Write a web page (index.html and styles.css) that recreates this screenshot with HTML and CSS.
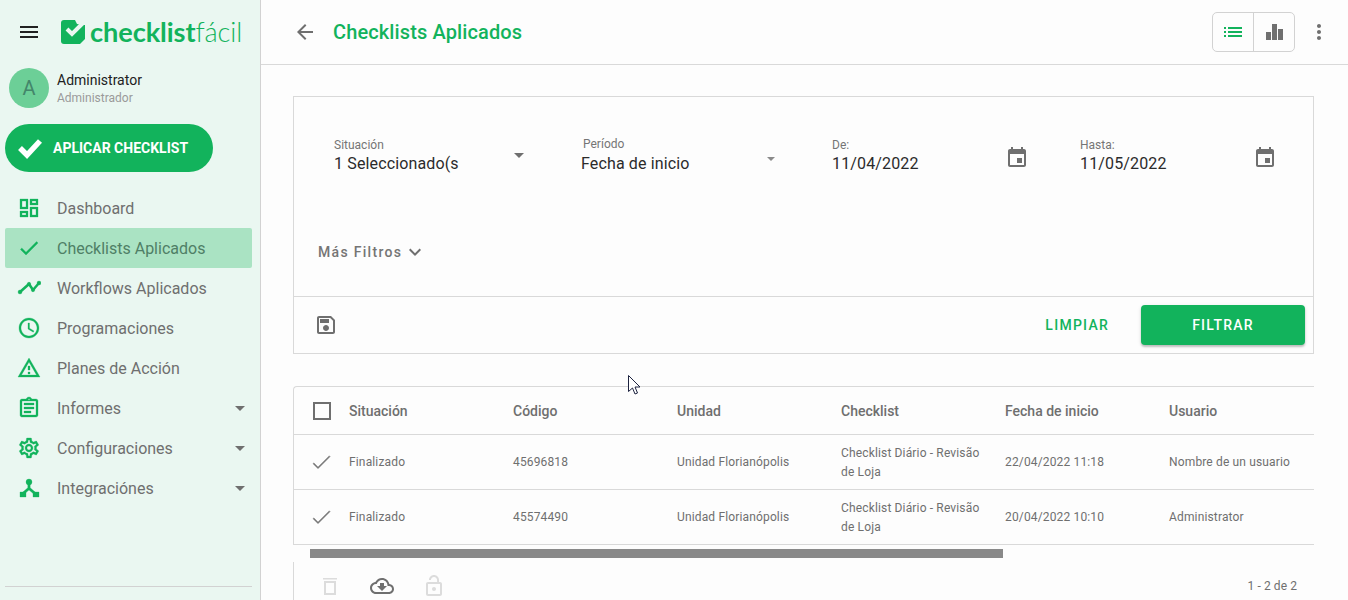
FILE: index.html
```html
<!DOCTYPE html>
<html lang="es">
<head>
<meta charset="utf-8">
<title>Checklists Aplicados</title>
<link rel="stylesheet" href="styles.css">
</head>
<body>
<div class="app">
  <aside class="sidebar">
    <div class="brand">
      <svg class="burger" viewBox="0 0 24 24"><path d="M3 18h18v-2H3v2zm0-5h18v-2H3v2zm0-7v2h18V6H3z"/></svg>
      <svg class="logo-mark" viewBox="0 0 24 24"><path d="M3 0H24V19L19 24H3Q0 24 0 21V3Q0 0 3 0Z" fill="#12b35c"/><path d="M14 0H24V5L22 5 16 4Z" fill="#eaf7f1"/><path d="M6 9l5 5L22 3" fill="none" stroke="#eaf7f1" stroke-width="4"/></svg>
      <span class="logo-text"><b>checklist</b>fácil</span>
    </div>
    <div class="user">
      <div class="avatar">A</div>
      <div class="user-info">
        <div class="user-name">Administrator</div>
        <div class="user-role">Administrador</div>
      </div>
    </div>
    <button class="apply">
      <svg viewBox="0 0 26 22"><path d="M3 11l7 7L23 4" fill="none" stroke="#fff" stroke-width="5.500"/></svg>
      <span>APLICAR CHECKLIST</span>
    </button>
    <nav class="nav">
      <a class="nav-item"><svg viewBox="0 0 24 24"><path d="M19 5v2h-4V5h4M9 5v6H5V5h4m10 8v6h-4v-6h4M9 17v2H5v-2h4M21 3h-8v6h8V3zM11 3H3v10h8V3zm10 8h-8v10h8V11zm-10 4H3v6h8v-6z"/></svg><span>Dashboard</span></a>
      <a class="nav-item active"><svg viewBox="0 0 24 24"><path d="M9 16.170L4.830 12l-1.420 1.410L9 19 21 7l-1.410-1.410z"/></svg><span>Checklists Aplicados</span></a>
      <a class="nav-item"><svg viewBox="0 0 24 24"><path d="M3 16l9-8 4 6 6-7" fill="none" stroke="#12b35c" stroke-width="2.500"/><circle cx="3" cy="16" r="2"/><circle cx="12" cy="8" r="1.800"/><circle cx="16" cy="14" r="1.800"/><circle cx="22" cy="7" r="2"/></svg><span>Workflows Aplicados</span></a>
      <a class="nav-item"><svg viewBox="0 0 24 24"><path d="M11.990 2C6.470 2 2 6.480 2 12s4.470 10 9.990 10C17.520 22 22 17.520 22 12S17.520 2 11.990 2zM12 20c-4.420 0-8-3.580-8-8s3.580-8 8-8 8 3.580 8 8-3.580 8-8 8zm.500-13H11v6l5.250 3.150.750-1.230-4.500-2.670z"/></svg><span>Programaciones</span></a>
      <a class="nav-item"><svg viewBox="0 0 24 24"><path d="M12 5.990L19.530 19H4.470L12 5.990M12 2L1 21h22L12 2zm1 14h-2v2h2v-2zm0-6h-2v4h2v-4z"/></svg><span>Planes de Acción</span></a>
      <a class="nav-item"><svg viewBox="0 0 24 24"><path d="M7 15h7v2H7zm0-4h10v2H7zm0-4h10v2H7zm12-4h-4.180C14.400 1.840 13.300 1 12 1c-1.300 0-2.400.840-2.820 2H5c-.140 0-.270.010-.400.040-.390.080-.740.280-1.010.550-.180.180-.330.400-.430.640-.100.230-.160.490-.160.770v14c0 .270.060.540.160.780s.250.450.430.640c.270.270.620.470 1.010.550.130.020.260.030.400.030h14c1.100 0 2-.900 2-2V5c0-1.100-.900-2-2-2zm-7-.250c.410 0 .750.340.750.750s-.340.750-.750.750-.750-.340-.750-.750.340-.750.750-.750zM19 19H5V5h14v14z"/></svg><span>Informes</span><i class="caret"></i></a>
      <a class="nav-item"><svg viewBox="0 0 24 24"><path d="M19.430 12.980c.040-.320.070-.640.070-.980s-.030-.660-.070-.980l2.110-1.650c.190-.150.240-.420.120-.640l-2-3.460c-.120-.220-.390-.300-.610-.220l-2.490 1c-.520-.400-1.080-.730-1.690-.980l-.380-2.650C14.460 2.180 14.250 2 14 2h-4c-.250 0-.460.180-.490.420l-.380 2.650c-.610.250-1.170.590-1.690.980l-2.490-1c-.230-.090-.490 0-.610.220l-2 3.460c-.130.220-.070.490.120.640l2.110 1.650c-.040.320-.070.650-.070.980s.030.660.070.980l-2.110 1.650c-.190.150-.240.420-.120.640l2 3.460c.120.220.390.300.610.220l2.490-1c.520.400 1.080.730 1.690.980l.380 2.650c.030.240.240.420.490.420h4c.250 0 .460-.180.490-.420l.380-2.650c.610-.250 1.170-.590 1.690-.980l2.490 1c.230.090.490 0 .610-.220l2-3.460c.120-.220.070-.490-.120-.640l-2.110-1.650zm-1.980-1.710c.040.310.050.520.050.730 0 .210-.020.430-.050.730l-.140 1.130.890.700 1.080.840-.700 1.210-1.270-.510-1.040-.420-.900.680c-.430.320-.840.560-1.250.730l-1.060.430-.160 1.130-.200 1.350h-1.400l-.190-1.350-.160-1.130-1.060-.430c-.430-.180-.830-.410-1.230-.710l-.910-.700-1.060.430-1.270.510-.700-1.210 1.080-.840.890-.700-.140-1.130c-.030-.310-.050-.540-.050-.740s.020-.430.050-.730l.140-1.130-.890-.700-1.080-.840.700-1.210 1.270.510 1.040.420.900-.680c.430-.320.840-.560 1.250-.730l1.060-.430.160-1.130.200-1.350h1.390l.190 1.350.160 1.130 1.060.430c.430.180.830.410 1.230.710l.910.700 1.060-.430 1.270-.510.700 1.210-1.070.850-.890.700.140 1.130zM12 8c-2.210 0-4 1.790-4 4s1.790 4 4 4 4-1.790 4-4-1.790-4-4-4zm0 6c-1.100 0-2-.900-2-2s.900-2 2-2 2 .900 2 2-.900 2-2 2z"/></svg><span>Configuraciones</span><i class="caret"></i></a>
      <a class="nav-item"><svg viewBox="0 0 24 24"><circle cx="12" cy="6" r="3"/><path d="M10.800 8h2.400v3.800l5.800 5-1.600 1.800L12 14l-5.400 4.600L5 16.800l5.800-5z"/><path d="M3 16h6v5H3zM16 16h6v5h-6z"/></svg><span>Integraciónes</span><i class="caret"></i></a>
    </nav>
    <div class="sidebar-rule"></div>
  </aside>

  <main class="main">
    <header class="topbar">
      <svg class="back" viewBox="0 0 24 24"><path d="M20 11H7.830l5.590-5.590L12 4l-8 8 8 8 1.410-1.410L7.830 13H20v-2z"/></svg>
      <h1>Checklists Aplicados</h1>
      <div class="view-toggle">
        <div class="toggle-cell"><svg viewBox="0 0 24 24"><path class="green" d="M3 13h2v-2H3v2zm0 4h2v-2H3v2zm0-8h2V7H3v2zm4 4h14v-2H7v2zm0 4h14v-2H7v2zM7 7v2h14V7H7z"/></svg></div>
        <div class="toggle-cell"><svg viewBox="0 0 24 24"><path d="M4 12h5v8H4zM10 4h5v16h-5zM16 9h5v11h-5z"/></svg></div>
      </div>
      <svg class="more" viewBox="0 0 24 24"><path d="M12 8c1.100 0 2-.900 2-2s-.900-2-2-2-2 .900-2 2 .900 2 2 2zm0 2c-1.100 0-2 .900-2 2s.900 2 2 2 2-.900 2-2-.900-2-2-2zm0 6c-1.100 0-2 .900-2 2s.900 2 2 2 2-.900 2-2-.900-2-2-2z"/></svg>
    </header>

    <section class="filters">
      <div class="fields">
        <div class="field f1"><label>Situación</label><div class="value">1 Seleccionado(s</div><i class="caret dark"></i></div>
        <div class="field f2"><label>Período</label><div class="value">Fecha de inicio</div><i class="caret small"></i></div>
        <div class="field f3"><label>De:</label><div class="value">11/04/2022</div>
          <svg class="cal" viewBox="0 0 24 24"><path d="M17 12h-5v5h5v-5zM16 1v2H8V1H6v2H5c-1.110 0-1.990.900-1.990 2L3 19c0 1.100.890 2 2 2h14c1.100 0 2-.900 2-2V5c0-1.100-.900-2-2-2h-1V1h-2zm3 18H5V8h14v11z"/></svg></div>
        <div class="field f4"><label>Hasta:</label><div class="value">11/05/2022</div>
          <svg class="cal" viewBox="0 0 24 24"><path d="M17 12h-5v5h5v-5zM16 1v2H8V1H6v2H5c-1.110 0-1.990.900-1.990 2L3 19c0 1.100.890 2 2 2h14c1.100 0 2-.900 2-2V5c0-1.100-.900-2-2-2h-1V1h-2zm3 18H5V8h14v11z"/></svg></div>
      </div>
      <div class="more-filters">
        <span>Más Filtros</span>
        <svg viewBox="0 0 24 24"><path d="M16.590 8.590L12 13.170 7.410 8.590 6 10l6 6 6-6z"/></svg>
      </div>
      <div class="filter-actions">
        <svg class="save" viewBox="0 0 24 24"><path d="M17 3H5c-1.110 0-2 .900-2 2v14c0 1.100.890 2 2 2h14c1.100 0 2-.900 2-2V7l-4-4zm2 16H5V5h11.170L19 7.830V19zm-7-7c-1.660 0-3 1.340-3 3s1.340 3 3 3 3-1.340 3-3-1.340-3-3-3zM6 6h9v4H6z"/></svg>
        <button class="btn-clear">LIMPIAR</button>
        <button class="btn-filter">FILTRAR</button>
      </div>
    </section>

    <section class="table">
      <div class="row head">
        <div class="check-cell"><span class="checkbox"></span></div>
        <div>Situación</div><div>Código</div><div>Unidad</div><div>Checklist</div><div>Fecha de inicio</div><div>Usuario</div>
      </div>
      <div class="row">
        <div class="check-cell"><svg viewBox="0 0 24 24"><path d="M9 16.170L4.830 12l-.700.700L9 17.600 21 5.600l-.700-.700z" stroke="#6f6f6f" stroke-width=".6"/></svg></div>
        <div>Finalizado</div><div>45696818</div><div>Unidad Florianópolis</div><div class="wrap">Checklist Diário - Revisão de Loja</div><div>22/04/2022 11:18</div><div>Nombre de un usuario</div>
      </div>
      <div class="row">
        <div class="check-cell"><svg viewBox="0 0 24 24"><path d="M9 16.170L4.830 12l-.700.700L9 17.600 21 5.600l-.700-.700z" stroke="#6f6f6f" stroke-width=".6"/></svg></div>
        <div>Finalizado</div><div>45574490</div><div>Unidad Florianópolis</div><div class="wrap">Checklist Diário - Revisão de Loja</div><div>20/04/2022 10:10</div><div>Administrator</div>
      </div>
    </section>
    <div class="scroll-track"><div class="scroll-thumb"></div></div>
    <div class="table-footer">
      <svg class="off" viewBox="0 0 24 24"><path d="M6 7h12v14H6zm2 2v10h8V9zM5 4h14v1.500H5z"/></svg>
      <svg class="cloud" viewBox="0 0 24 24"><path d="M19.350 10.040C18.670 6.590 15.640 4 12 4 9.110 4 6.600 5.640 5.350 8.040 2.340 8.360 0 10.910 0 14c0 3.310 2.690 6 6 6h13c2.760 0 5-2.240 5-5 0-2.640-2.050-4.780-4.650-4.960zM19 18H6c-2.210 0-4-1.790-4-4s1.790-4 4-4h.710C7.370 7.690 9.480 6 12 6c3.040 0 5.500 2.460 5.500 5.500v.500H19c1.660 0 3 1.340 3 3s-1.340 3-3 3z M10 9h4v3h3l-5 5-5-5h3z"/></svg>
      <svg class="off lock" viewBox="0 0 24 24"><path d="M12 17c1.100 0 2-.900 2-2s-.900-2-2-2-2 .900-2 2 .900 2 2 2zm6-9h-1V6c0-2.760-2.240-5-5-5S7 3.240 7 6h1.900c0-1.710 1.390-3.100 3.100-3.100s3.100 1.390 3.100 3.100v2H6c-1.100 0-2 .900-2 2v10c0 1.100.900 2 2 2h12c1.100 0 2-.900 2-2V10c0-1.100-.900-2-2-2zm0 12H6V10h12v10z"/></svg>
      <span class="pager">1 - 2 de 2</span>
    </div>
  </main>
</div>
<svg class="cursor" viewBox="0 0 13 20"><path d="M.500.500v16l4-3.500 2.500 6 2.500-1-2.500-6h5z" fill="#fff" stroke="#1d2340" stroke-width="1"/></svg>
</body>
</html>
```

FILE: styles.css
```css
* { box-sizing: border-box; }
html, body { margin: 0; height: 600px; overflow: hidden; }
body { font-family: Roboto, sans-serif; background: #fdfdfd; color: #6f6f6f; position: relative; }
.app { display: flex; height: 600px; }

.sidebar { width: 261px; flex: none; background: #eaf7f1; border-right: 1px solid #d2d2d2; display: flex; flex-direction: column; height: 600px; }
.brand { display: flex; align-items: center; height: 64px; padding: 0 0 0 17px; }
.burger { width: 24px; height: 24px; fill: #212121; flex: none; }
.logo-mark { width: 24px; height: 24px; margin-left: 20px; flex: none; }
.logo-text { font-family: Lato, sans-serif; font-size: 27.200px; color: #12b35c; margin-left: 5px; font-weight: 300; letter-spacing: -.1px; line-height: 1; }
.logo-text b { font-weight: 700; }

.user { display: flex; align-items: center; padding: 4px 0 0 9px; height: 44px; }
.avatar { width: 40px; height: 40px; border-radius: 50%; background: #6ccf97; color: #43866a; display: flex; align-items: center; justify-content: center; font-size: 20px; flex: none; }
.user-info { margin-left: 8px; }
.user-name { font-size: 14px; line-height: 20px; color: #212121; }
.user-role { font-size: 12px; line-height: 16px; color: #9a9a9a; }

.apply { margin: 16px 0 0 5px; width: 208px; height: 48px; border-radius: 24px; border: 0; background: #12b35c; color: #fff; display: flex; align-items: center; padding: 0 0 0 12px; font: 700 14px Roboto, sans-serif; flex: none; }
.apply svg { width: 26px; height: 22px; flex: none; }
.apply span { margin-left: 10px; }

.nav { margin: 16px 0 0 5px; width: 247px; display: flex; flex-direction: column; }
.nav-item { height: 40px; display: flex; align-items: center; padding-left: 12px; font-size: 16px; color: #6f6f6f; border-radius: 2px; }
.nav-item svg { width: 24px; height: 24px; fill: #12b35c; stroke: #12b35c; stroke-width: .3; flex: none; margin-right: 16px; }
.nav-item span { flex: 1; }
.nav-item.active { background: #aae3c3; color: #4f7f66; }
.caret { width: 0; height: 0; border: 5px solid transparent; border-top-color: #6f6f6f; border-bottom: 0; display: block; }
.nav-item .caret { margin-right: 7px; }
.sidebar-rule { margin: auto 8px 13px 5px; border-top: 1px solid #d2d2d2; }

.main { flex: 1; min-width: 0; padding: 0 34px 0 32px; }
.topbar { height: 65px; margin: 0 -34px 0 -32px; padding: 0 17px 0 32px; border-bottom: 1px solid #d9d9d9; display: flex; align-items: center; }
.back { width: 24px; height: 24px; fill: #6f6f6f; flex: none; }
.topbar h1 { margin: 0 0 0 16px; font-size: 20px; font-weight: 500; letter-spacing: .12px; color: #12b35c; flex: 1; line-height: 24px; }
.view-toggle { display: flex; width: 83px; height: 40px; border: 1px solid #d2d2d2; border-radius: 5px; }
.toggle-cell { flex: 1; display: flex; align-items: center; justify-content: center; }
.toggle-cell + .toggle-cell { border-left: 1px solid #d2d2d2; }
.toggle-cell svg { width: 24px; height: 24px; fill: #6f6f6f; }
.toggle-cell .green { fill: #12b35c; }
.more { width: 24px; height: 24px; fill: #6f6f6f; margin-left: 12px; flex: none; }

.filters { margin-top: 31px; height: 258px; border: 1px solid #d9d9d9; display: flex; flex-direction: column; }
.fields { display: grid; grid-template-columns: 249px 249px 248px 248px; padding: 40px 0 0 40px; height: 125px; }
.field { position: relative; height: 40px; }
.field label { display: block; font-size: 12px; line-height: 16px; color: #757575; }
.field .value { font-size: 16px; line-height: 20px; margin-top: 1px; letter-spacing: .14px; color: #2b2b2b; white-space: nowrap; }
.field .caret { position: absolute; top: 16px; border-width: 5.500px; border-bottom: 0; }
.field .caret.small { top: 20px; border-width: 4.500px; border-bottom: 0; border-top-color: #8a8a8a; }
.f1 .caret { left: 180px; }
.f2 { margin-left: -2px; }
.f2 label { margin: -1px 0 2px 2px; }
.f2 .caret { left: 186px; }
.f3 .cal, .f4 .cal { position: absolute; top: 9px; left: 173px; width: 24px; height: 24px; fill: #6f6f6f; }
.more-filters { display: flex; align-items: center; height: 74px; padding: 0 0 14px 24px; font-size: 14px; font-weight: 500; letter-spacing: 1.300px; color: #757575; }
.more-filters svg { width: 24px; height: 24px; margin-left: 1px; fill: #6f6f6f; }
.filter-actions { flex: 1; border-top: 1px solid #d9d9d9; display: flex; align-items: center; padding: 0 8px 0 20px; }
.save { width: 24px; height: 24px; fill: #6f6f6f; flex: none; margin-right: auto; }
.btn-clear { border: 0; background: none; color: #12b35c; font: 500 14px Roboto, sans-serif; letter-spacing: 1.250px; padding: 0; margin-right: 32px; }
.btn-filter { width: 164px; height: 40px; border: 0; border-radius: 4px; background: #12b35c; color: #fff; font: 500 14px Roboto, sans-serif; letter-spacing: 1.250px; box-shadow: 0 2px 2px rgba(0,0,0,.2), 0 1px 4px rgba(0,0,0,.1); }

.table { margin-top: 32px; border: 1px solid #d9d9d9; border-right: 0; border-radius: 4px 0 0 0; }
.row { display: grid; grid-template-columns: 55px repeat(6, 164px); height: 55px; align-items: center; font-size: 12px; color: #6f6f6f; letter-spacing: .15px; border-bottom: 1px solid #d9d9d9; overflow: hidden; }
.row:last-child { height: 54px; border-bottom: 0; }
.row.head { height: 48px; font-size: 14px; font-weight: 500; letter-spacing: 0; }
.wrap { line-height: 19px; padding: 1px 24px 0 0; }
.check-cell { padding-left: 16px; display: flex; align-items: center; }
.check-cell svg { width: 24px; height: 24px; fill: #6f6f6f; margin: 1px 0 0 -1px; }
.checkbox { width: 18px; height: 18px; border: 2px solid #6f6f6f; margin-left: 3px; display: block; }
.scroll-track { height: 18px; padding: 4px 0 5px 17px; }
.scroll-thumb { width: 693px; height: 9px; background: #898989; }
.table-footer { height: 48px; border-left: 1px solid #d9d9d9; display: flex; align-items: center; padding: 0 17px 0 24px; margin-top: -1px; }
.table-footer svg { width: 24px; height: 24px; flex: none; }
.off { fill: #dcdcdc; }
.cloud { fill: #6f6f6f; margin-left: 28px; }
.lock { margin-left: 28px; }
.pager { margin-left: auto; font-size: 12px; color: #6f6f6f; letter-spacing: .08px; }

.cursor { position: absolute; left: 628px; top: 375px; width: 13px; height: 20px; }
```
